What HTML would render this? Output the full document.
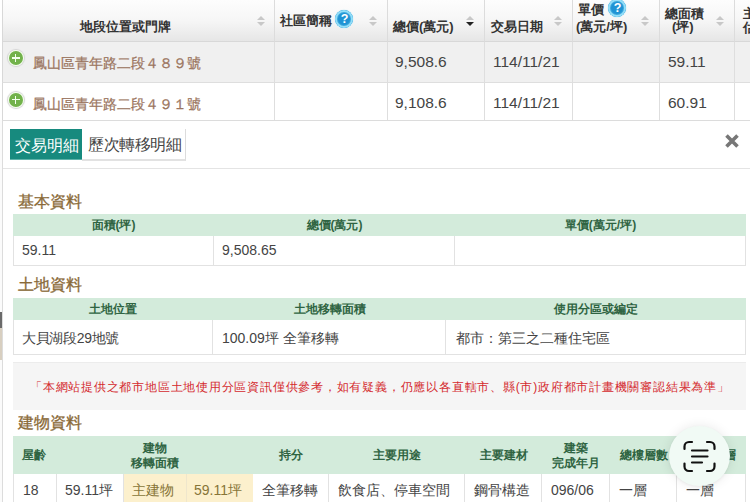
<!DOCTYPE html>
<html><head><meta charset="utf-8">
<style>
*{box-sizing:border-box;margin:0;padding:0}
html,body{width:750px;height:502px;overflow:hidden;background:#fff;font-family:"Liberation Sans",sans-serif;color:#333}
.abs{position:absolute}
#top{position:absolute;left:0;top:0;width:750px;height:122px;background:#fff}
.th{position:absolute;top:0;height:42px;background:linear-gradient(#fdfdfd 0%,#f6f6f6 50%,#e6e6e6 100%);border-right:1px solid #dcdcdc;border-bottom:1px solid #d8d8d8;font-size:13px;font-weight:bold;color:#333}
.sort{position:absolute;width:8px;height:11px}
.sort:before{content:"";position:absolute;left:0;top:0;border-left:4px solid transparent;border-right:4px solid transparent;border-bottom:4px solid #c8c8c8}
.sort:after{content:"";position:absolute;left:0;top:6px;border-left:4px solid transparent;border-right:4px solid transparent;border-top:4px solid #c8c8c8}
.sort.desc:after{border-top-color:#222}
.q{position:absolute;width:18px;height:18px;border-radius:50%;background:#1f93d4;box-shadow:0 0 0 2px #93def8 inset,0 0 0 3px #3aa6dc inset,0 0 1px 0.5px #d6eef6;color:#fff;font-size:12.5px;font-weight:bold;text-align:center;line-height:19px;padding-left:1px}
.td{position:absolute;border-right:1px solid #dedede;border-bottom:1px solid #dedede;font-size:15.5px;color:#444}
.plus{position:absolute;width:14px;height:14px;border-radius:50%;background:#72b24b;box-shadow:0 0 0 1px #f6fff0,0 0 1px 2px #d4d4d4}
.plus:before{content:"";position:absolute;left:3px;top:6.2px;width:8px;height:1.7px;background:#f4fff0}
.plus:after{content:"";position:absolute;left:6.2px;top:3px;width:1.7px;height:8px;background:#f4fff0}
.addr{position:absolute;left:33px;font-size:14px;color:#9b7560;-webkit-text-stroke:0.25px #9b7560;white-space:nowrap}
#modal{position:absolute;left:2px;top:120px;width:760px;height:400px;background:#fff;border-top:1px solid #dcdcdc;border-left:1px solid #dcdcdc}
.sec{position:absolute;left:18px;font-size:16px;color:#8a6a38;-webkit-text-stroke:0.3px #8a6a38;white-space:nowrap}
.tbl{position:absolute;left:13px}
.gh{position:absolute;background:#d3ebdb;color:#2f6442;font-size:12px;font-weight:bold;text-align:center;white-space:nowrap}
.cell{position:absolute;background:#fff;border-right:1px solid #e2e2e2;border-bottom:1px solid #e2e2e2;font-size:14px;color:#444;white-space:nowrap}
</style></head><body>
<div id="top">
  <div class="th" style="left:0;width:275px;border-left:1px solid #d8d8d8;margin-left:2px;width:273px"><span class="abs" style="left:77px;top:18px">地段位置或門牌</span><i class="sort" style="left:254px;top:16px"></i></div>
  <div class="th" style="left:275px;width:113px"><span class="abs" style="left:5px;top:12px">社區簡稱</span><span class="q" style="left:60px;top:10px">?</span><i class="sort" style="left:94px;top:16px"></i></div>
  <div class="th" style="left:388px;width:97px"><span class="abs" style="left:5px;top:18px">總價(萬元)</span><i class="sort desc" style="left:78px;top:16px"></i></div>
  <div class="th" style="left:485px;width:88px"><span class="abs" style="left:6px;top:18px">交易日期</span><i class="sort" style="left:69px;top:16px"></i></div>
  <div class="th" style="left:573px;width:87px"><span class="abs" style="left:5px;top:1px">單價</span><span class="q" style="left:35px;top:-1px">?</span><span class="abs" style="left:3px;top:18px">(萬元/坪)</span><i class="sort" style="left:68px;top:16px"></i></div>
  <div class="th" style="left:660px;width:75px"><span class="abs" style="left:5px;top:5px">總面積</span><span class="abs" style="left:12px;top:18px">(坪)</span><i class="sort" style="left:56px;top:16px"></i></div>
  <div class="th" style="left:735px;width:30px"><span class="abs" style="left:8px;top:5px">主</span><span class="abs" style="left:8px;top:19px">估</span></div>

  <div class="td" style="left:0;top:42px;width:275px;height:41px;background:#f0f0f0;border-left:1px solid #d8d8d8;margin-left:2px;width:273px"></div>
  <div class="td" style="left:275px;top:42px;width:113px;height:41px;background:#f0f0f0"></div>
  <div class="td" style="left:388px;top:42px;width:97px;height:41px;background:#f0f0f0"><span class="abs" style="left:7px;top:11px">9,508.6</span></div>
  <div class="td" style="left:485px;top:42px;width:88px;height:41px;background:#f0f0f0"><span class="abs" style="left:8px;top:11px">114/11/21</span></div>
  <div class="td" style="left:573px;top:42px;width:87px;height:41px;background:#f0f0f0"></div>
  <div class="td" style="left:660px;top:42px;width:75px;height:41px;background:#f0f0f0"><span class="abs" style="left:8px;top:11px">59.11</span></div>
  <div class="td" style="left:735px;top:42px;width:30px;height:41px;background:#f0f0f0"></div>
  <i class="plus" style="left:8.6px;top:51.1px"></i>
  <span class="addr" style="top:54.5px">鳳山區青年路二段４８９號</span>

  <div class="td" style="left:0;top:83px;width:275px;height:40px;background:#fff;border-left:1px solid #d8d8d8;margin-left:2px;width:273px"></div>
  <div class="td" style="left:275px;top:83px;width:113px;height:40px"></div>
  <div class="td" style="left:388px;top:83px;width:97px;height:40px"><span class="abs" style="left:7px;top:11px">9,108.6</span></div>
  <div class="td" style="left:485px;top:83px;width:88px;height:40px"><span class="abs" style="left:8px;top:11px">114/11/21</span></div>
  <div class="td" style="left:573px;top:83px;width:87px;height:40px"></div>
  <div class="td" style="left:660px;top:83px;width:75px;height:40px"><span class="abs" style="left:8px;top:11px">60.91</span></div>
  <div class="td" style="left:735px;top:83px;width:30px;height:40px"></div>
  <i class="plus" style="left:8.6px;top:92.6px"></i>
  <span class="addr" style="top:95.5px">鳳山區青年路二段４９１號</span>
</div>

<div id="modal"></div>
<div class="abs" style="left:0;top:120px;width:2px;height:382px;background:#fbfbfb"></div>
<div class="abs" style="left:0;top:312px;width:2px;height:16px;background:#6a6a6a"></div>
<div class="abs" style="left:0;top:328px;width:2px;height:32px;background:#d8cfc0"></div>

<!-- tabs -->
<div class="abs" style="left:10px;top:129px;width:72px;height:31px;background:#178a7e;color:#fff;font-size:16px;border-bottom:1px solid #5fb3aa"><span class="abs" style="left:5px;top:7px">交易明細</span></div>
<div class="abs" style="left:82px;top:129px;width:104px;height:32px;background:#fff;color:#444;font-size:16px;border-right:1px solid #dcdcdc;border-bottom:2px solid #e2e2e2"><span class="abs" style="left:6px;top:6px;letter-spacing:-0.4px">歷次轉移明細</span></div>
<div class="abs" style="left:3px;top:168px;width:747px;height:1px;background:#e4e4e4"></div>
<!-- close -->
<svg class="abs" style="left:724px;top:133px" width="16" height="16" viewBox="0 0 16 16"><path d="M2.5 2.5L13.5 13.5M13.5 2.5L2.5 13.5" stroke="#777" stroke-width="3.6"/></svg>

<!-- 基本資料 -->
<span class="sec" style="top:192px">基本資料</span>
<div class="gh" style="left:13px;top:214px;width:733px;height:22px"></div>
<div class="gh" style="left:13px;top:214px;width:201px;height:22px;line-height:22px;background:transparent">面積(坪)</div>
<div class="gh" style="left:214px;top:214px;width:241px;height:22px;line-height:22px;background:transparent">總價(萬元)</div>
<div class="gh" style="left:455px;top:214px;width:291px;height:22px;line-height:22px;background:transparent">單價(萬元/坪)</div>
<div class="cell" style="left:13px;top:236px;width:201px;height:30px;border-left:1px solid #e2e2e2"><span class="abs" style="left:8px;top:6px">59.11</span></div>
<div class="cell" style="left:214px;top:236px;width:241px;height:30px"><span class="abs" style="left:8px;top:6px">9,508.65</span></div>
<div class="cell" style="left:455px;top:236px;width:291px;height:30px"></div>

<!-- 土地資料 -->
<span class="sec" style="top:275px">土地資料</span>
<div class="gh" style="left:13px;top:298px;width:733px;height:22px"></div>
<div class="gh" style="left:13px;top:298px;width:200px;height:22px;line-height:22px;background:transparent">土地位置</div>
<div class="gh" style="left:213px;top:298px;width:233px;height:22px;line-height:22px;background:transparent">土地移轉面積</div>
<div class="gh" style="left:446px;top:298px;width:300px;height:22px;line-height:22px;background:transparent">使用分區或編定</div>
<div class="cell" style="left:13px;top:320px;width:200px;height:35px;border-left:1px solid #e2e2e2"><span class="abs" style="left:8px;top:10px;letter-spacing:-0.3px">大貝湖段29地號</span></div>
<div class="cell" style="left:213px;top:320px;width:233px;height:35px"><span class="abs" style="left:9px;top:10px">100.09坪 全筆移轉</span></div>
<div class="cell" style="left:446px;top:320px;width:300px;height:35px"><span class="abs" style="left:10px;top:10px">都市：第三之二種住宅區</span></div>

<!-- notice -->
<div class="abs" style="left:13px;top:362px;width:733px;height:48px;background:#f5f5f5;border-top:1px solid #ececec"></div>
<span class="abs" style="left:30px;top:379px;font-size:12px;letter-spacing:0.78px;color:#d42a2e;white-space:nowrap">「本網站提供之都市地區土地使用分區資訊僅供參考，如有疑義，仍應以各直轄市、縣(市)政府都市計畫機關審認結果為準」</span>

<!-- 建物資料 -->
<span class="sec" style="top:413px">建物資料</span>
<div class="gh" style="left:13px;top:436px;width:733px;height:38px"></div>
<div class="gh" style="left:13px;top:447px;width:42px">屋齡</div>
<div class="gh" style="left:123px;top:441px;width:64px;line-height:14.5px">建物<br>移轉面積</div>
<div class="gh" style="left:253px;top:447px;width:76px">持分</div>
<div class="gh" style="left:329px;top:447px;width:136px">主要用途</div>
<div class="gh" style="left:465px;top:447px;width:77px">主要建材</div>
<div class="gh" style="left:542px;top:441px;width:68px;line-height:14.5px">建築<br>完成年月</div>
<div class="gh" style="left:610px;top:447px;width:67px">總樓層數</div>
<div class="gh" style="left:677px;top:447px;width:69px;text-align:left;padding-left:11px">移轉樓層</div>

<div class="cell" style="left:13px;top:474px;width:44px;height:40px;border-left:1px solid #e2e2e2"><span class="abs" style="left:9px;top:8px">18</span></div>
<div class="cell" style="left:57px;top:474px;width:67px;height:40px"><span class="abs" style="left:8px;top:8px">59.11坪</span></div>
<div class="cell" style="left:124px;top:474px;width:63px;height:40px;background:#fcf0cd;color:#877538;border-right-color:#efe6cc"><span class="abs" style="left:8px;top:8px">主建物</span></div>
<div class="cell" style="left:187px;top:474px;width:67px;height:40px;background:#fcf0cd;color:#877538"><span class="abs" style="left:7px;top:8px">59.11坪</span></div>
<div class="cell" style="left:253px;top:474px;width:76px;height:40px"><span class="abs" style="left:9px;top:8px">全筆移轉</span></div>
<div class="cell" style="left:329px;top:474px;width:136px;height:40px"><span class="abs" style="left:9px;top:8px">飲食店、停車空間</span></div>
<div class="cell" style="left:465px;top:474px;width:77px;height:40px"><span class="abs" style="left:9px;top:8px">鋼骨構造</span></div>
<div class="cell" style="left:542px;top:474px;width:68px;height:40px"><span class="abs" style="left:9px;top:8px">096/06</span></div>
<div class="cell" style="left:610px;top:474px;width:67px;height:40px"><span class="abs" style="left:9px;top:8px">一層</span></div>
<div class="cell" style="left:677px;top:474px;width:69px;height:40px"><span class="abs" style="left:9px;top:8px">一層</span></div>

<!-- lens button -->
<div class="abs" style="left:669px;top:426px;width:61px;height:60px;border-radius:50%;background:#f1faf5;box-shadow:0 0 12px rgba(0,0,0,0.09),0 1px 3px rgba(0,0,0,0.05)"></div>
<svg class="abs" style="left:682px;top:439px" width="35" height="35" viewBox="0 0 35 35" fill="none" stroke="#111" stroke-width="2.2" stroke-linecap="round">
<path d="M2.5 10V7.5A4.5 4.5 0 0 1 7 3H10"/><path d="M25 3H28A4.5 4.5 0 0 1 32.5 7.5V10"/>
<path d="M2.5 24.5V27.5A4.5 4.5 0 0 0 7 32H10"/><path d="M25 32H28A4.5 4.5 0 0 0 32.5 27.5V24.5"/>
<path d="M10 11.5H25.5M10 17.5H25.5M10 23.5H20"/>
</svg>
</body></html>
